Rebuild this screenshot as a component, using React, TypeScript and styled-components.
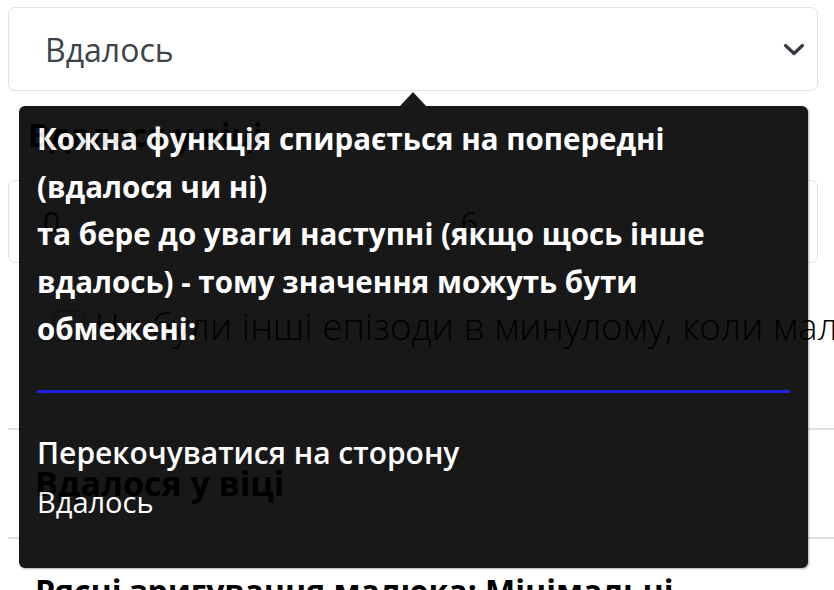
import styled, { createGlobalStyle } from "styled-components";

const GlobalStyle = createGlobalStyle`
  html, body {
    margin: 0;
    padding: 0;
    background: #ffffff;
  }
  body {
    font-family: "Open Sans", "Noto Sans", sans-serif;
    color: #212529;
  }
`;

const Page = styled.div`
  position: relative;
  width: 834px;
  height: 590px;
  overflow: hidden;
  padding: 7px 0 0 8px;
  box-sizing: border-box;
`;

const Form = styled.div`
  width: 810px;
`;

const SelectBox = styled.div`
  height: 84px;
  box-sizing: border-box;
  border: 1px solid #dee2e6;
  border-radius: 7px;
  display: flex;
  align-items: center;
  justify-content: space-between;
  padding: 0 12px 0 36px;
  font-size: 32px;
  color: #3d434a;
`;

const Heading = styled.h3<{ indent: number; size?: number }>`
  margin: 0;
  padding-left: ${({ indent }) => indent}px;
  font-size: ${({ size = 32 }) => size}px;
  font-weight: 700;
  line-height: 40px;
  color: #000;
  white-space: nowrap;
`;

const FirstHeading = styled(Heading)`
  margin-top: 24px;
`;

const InputRow = styled.div`
  display: grid;
  grid-template-columns: 1fr 1fr;
  gap: 25px;
  margin-top: 25px;
`;

const Field = styled.div`
  height: 83px;
  box-sizing: border-box;
  border: 1px solid #dee2e6;
  border-radius: 7px;
  display: flex;
  align-items: center;
  padding-left: 34px;
  font-size: 30px;
  color: #212529;
`;

const CheckRow = styled.label`
  display: flex;
  align-items: center;
  gap: 10px;
  height: 44px;
  margin-top: 41px;
  padding-left: 45px;
  font-size: 37px;
  font-weight: 300;
  line-height: 44px;
  color: #000;
  white-space: nowrap;
`;

const CheckBox = styled.span`
  width: 32px;
  height: 32px;
  flex: none;
  box-sizing: border-box;
  border: 2px solid #adb5bd;
  border-radius: 6px;
`;

const Rule = styled.hr<{ gap?: number }>`
  margin: ${({ gap = 0 }) => gap}px 0 0 0;
  width: 826px;
  border: 0;
  border-top: 2px solid #dee2e6;
`;

const Section = styled.div<{ top: number; bottom: number }>`
  padding: ${({ top, bottom }) => `${top}px 0 ${bottom}px`};
`;

const Tooltip = styled.div`
  position: absolute;
  left: 19px;
  top: 92px;
  width: 789px;
  opacity: 0.9;
  display: flex;
  flex-direction: column;
  align-items: center;
`;

const Arrow = styled.div`
  width: 0;
  height: 0;
  margin-left: -2px;
  border-left: 13px solid transparent;
  border-right: 13px solid transparent;
  border-bottom: 14px solid #000;
`;

const TooltipBody = styled.div`
  align-self: stretch;
  height: 462px;
  box-sizing: border-box;
  background: #000;
  border-radius: 6px;
  box-shadow: 1px 1px 2px rgba(0, 0, 0, 0.35);
  padding: 9px 18px 0 18px;
  color: #fff;
`;

const Note = styled.p`
  margin: 0;
  font-size: 29.5px;
  font-weight: 700;
  line-height: 47.5px;
  white-space: nowrap;
`;

const Divider = styled.div`
  height: 3px;
  margin-top: 37px;
  width: 753px;
  background: #0a0ae0;
`;

const ItemTitle = styled.div`
  margin-top: 42px;
  font-size: 30px;
  font-weight: 600;
  line-height: 36px;
  white-space: nowrap;
`;

const ItemValue = styled.div`
  margin-top: 13px;
  font-size: 29px;
  font-weight: 400;
  line-height: 36px;
`;

function Chevron() {
  return (
    <svg width="22" height="13" viewBox="0 0 22 13" fill="none">
      <path d="M2.5 2.5l8.5 8 8.5-8" stroke="#343a40" strokeWidth="3.2" strokeLinecap="round" strokeLinejoin="round" />
    </svg>
  );
}

export default function App() {
  return (
    <>
      <GlobalStyle />
      <Page>
        <Form>
          <SelectBox>
            <span>Вдалось</span>
            <Chevron />
          </SelectBox>

          <FirstHeading indent={20}>Вдалося у віці</FirstHeading>
          <InputRow>
            <Field>0</Field>
            <Field>6</Field>
          </InputRow>

          <CheckRow>
            <CheckBox />
            Чи були інші епізоди в минулому, коли малюк перекочувався на сторону?
          </CheckRow>

          <Rule gap={80} />
          <Section top={33} bottom={34}>
            <Heading indent={27} size={34}>Вдалося у віці</Heading>
          </Section>
          <Rule />
          <Section top={32} bottom={0}>
            <Heading indent={27}>Рясні зригування малюка: Мінімальні</Heading>
          </Section>
        </Form>

        <Tooltip>
          <Arrow />
          <TooltipBody>
            <Note>
              Кожна функція спирається на попередні
              <br />
              (вдалося чи ні)
              <br />
              та бере до уваги наступні (якщо щось інше
              <br />
              вдалось) - тому значення можуть бути
              <br />
              обмежені:
            </Note>
            <Divider />
            <ItemTitle>Перекочуватися на сторону</ItemTitle>
            <ItemValue>Вдалось</ItemValue>
          </TooltipBody>
        </Tooltip>
      </Page>
    </>
  );
}
